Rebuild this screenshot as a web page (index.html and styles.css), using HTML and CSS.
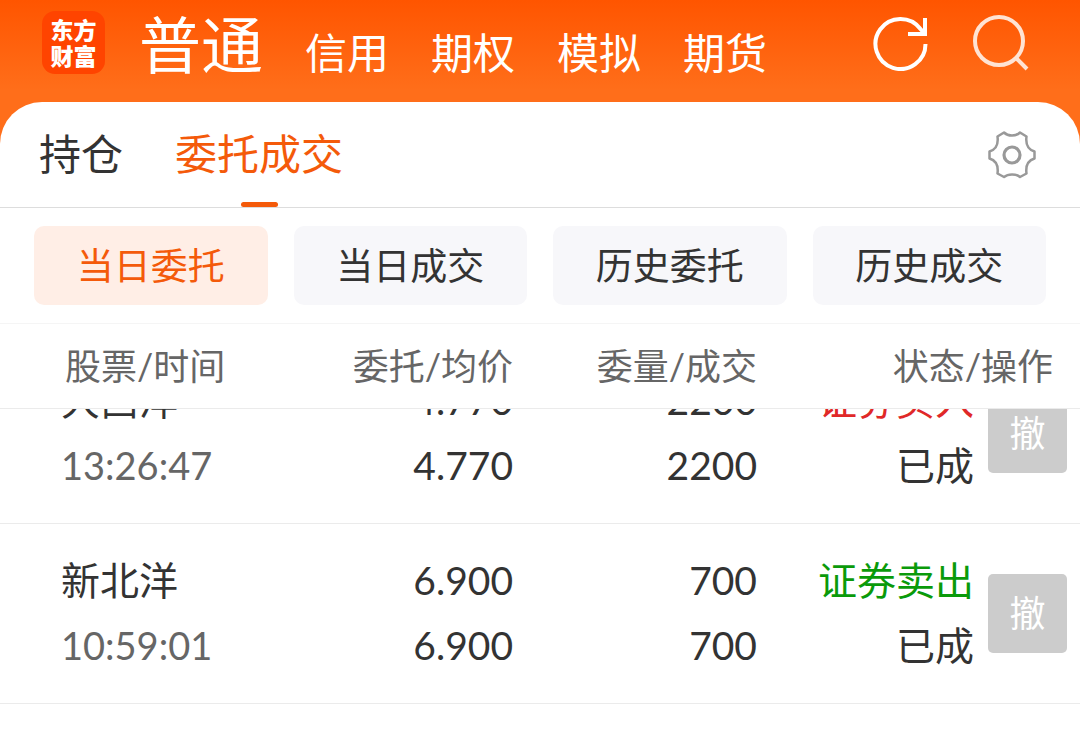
FILE: index.html
```
<!DOCTYPE html>
<html lang="zh-CN">
	<head>
		<meta charset="utf-8">
		<meta name="viewport" content="width=device-width, initial-scale=1.0">
		<title>委托成交</title>
		<link rel="stylesheet" href="styles.css">
	</head>
	<body>
		<header class="top">
			<div class="logo"><span>东方</span><span>财富</span></div>
			<nav class="nav">
				<a class="current" href="#">普通</a>
				<a href="#">信用</a>
				<a href="#">期权</a>
				<a href="#">模拟</a>
				<a href="#">期货</a>
			</nav>
			<button class="icon refresh" type="button" aria-label="刷新">
				<svg width="56" height="56" viewBox="0 0 56 56" fill="none" stroke="#fff" stroke-width="4">
					<path d="M52.500 29A25 25 0 1 1 47.500 14L51 18"/>
					<path d="M52 3V19H35"/>
				</svg>
			</button>
			<button class="icon search" type="button" aria-label="搜索">
				<svg width="56" height="56" viewBox="0 0 56 56" fill="none" stroke="#ffe3d3" stroke-width="4">
					<circle cx="26" cy="26" r="24"/>
					<path d="M43 43L54 54"/>
				</svg>
			</button>
		</header>

		<main class="card">
			<div class="tabs">
				<a href="#">持仓</a>
				<a class="active" href="#">委托成交</a>
				<button class="icon setting" type="button" aria-label="设置">
					<svg width="48" height="48" viewBox="0 0 48 48" fill="none" stroke="#999" stroke-width="2.500" stroke-linejoin="round">
						<path d="M16 1.500C20 5.500 28 5.500 32 1.500L38.500 5.500C37.500 13 40 18.500 46.500 20.500V27.500C40 29.500 37.500 35 38.500 42.500L32 46C28 42.500 20 42.500 16 46L9.500 42.500C10.500 35 8 29.500 1.500 27.500V20.500C8 18.500 10.500 13 9.500 5.500Z"/>
						<circle cx="24" cy="24" r="8" stroke-width="3.200"/>
					</svg>
				</button>
			</div>

			<div class="chips">
				<button class="active" type="button">当日委托</button>
				<button type="button">当日成交</button>
				<button type="button">历史委托</button>
				<button type="button">历史成交</button>
			</div>

			<table class="orders">
				<thead>
					<tr>
						<th>股票/时间</th>
						<th>委托/均价</th>
						<th>委量/成交</th>
						<th class="last" colspan="2">状态/操作</th>
					</tr>
				</thead>
				<tbody>
					<tr>
						<td>大西洋<br><span class="time">13:26:47</span></td>
						<td>4.770<br>4.770</td>
						<td>2200<br>2200</td>
						<td><span class="buy">证券买入</span><br>已成</td>
						<td><button class="cancel" type="button">撤</button></td>
					</tr>
					<tr>
						<td>新北洋<br><span class="time">10:59:01</span></td>
						<td>6.900<br>6.900</td>
						<td>700<br>700</td>
						<td><span class="sell">证券卖出</span><br>已成</td>
						<td><button class="cancel" type="button">撤</button></td>
					</tr>
				</tbody>
			</table>
		</main>
	</body>
</html>
```

FILE: styles.css
```
*{
	box-sizing: border-box;
}
body{
	margin: 0;
	color: #333;
	background: #fff linear-gradient(#ff5500, #ff6e1a 90px) no-repeat;
	background-size: 100% 160px;
	font-family: Lato, "Noto Sans CJK SC", sans-serif;
}
a{
	color: inherit;
	text-decoration: none;
}
button{
	padding: 0;
	border: 0;
	color: inherit;
	font-family: inherit;
}
.icon{
	display: flex;
	background: none;
}

/* 顶部导航 */
.top{
	display: flex;
	align-items: center;
	height: 102px;
	padding: 0 51px 17px 42px;
	color: #fff;
}
.logo{
	display: flex;
	flex-direction: column;
	justify-content: center;
	width: 63px;
	height: 63px;
	border-radius: 13px;
	background: #ff4400;
	font-size: 23px;
	font-weight: 900;
	line-height: 26px;
	text-align: center;
}
.nav{
	display: flex;
	flex: 1;
	align-items: baseline;
	gap: 42px;
	margin-left: 34px;
	padding-top: 12px;
	font-size: 42px;
	line-height: 86px;
	white-space: nowrap;
}
.nav .current{
	font-size: 62px;
}
.refresh{
	margin-right: 44px;
}

/* 白色卡片 */
.card{
	border-radius: 42px 42px 0 0;
	background: #fff;
	overflow: hidden;
}
.tabs{
	display: flex;
	align-items: center;
	gap: 52px;
	height: 106px;
	padding: 0 44px 0 39px;
	border-bottom: 1px solid #ddd;
	font-size: 42px;
	line-height: 105px;
}
.tabs .active{
	position: relative;
	color: #f45a0a;
}
.tabs .active::after{
	content: '';
	position: absolute;
	bottom: 0;
	left: 50%;
	width: 37px;
	height: 5px;
	margin-left: -18px;
	border-radius: 3px;
	background: #f45a0a;
}
.setting{
	margin-left: auto;
}

.chips{
	display: grid;
	grid-template-columns: repeat(4, 1fr);
	gap: 26px;
	padding: 18px 34px;
	border-bottom: 1px solid #f5f5f5;
}
.chips button{
	height: 79px;
	padding-bottom: 4px;
	border-radius: 10px;
	background: #f7f7fa;
	font-size: 37px;
}
.chips .active{
	color: #f45a0a;
	background: #ffeee6;
}

/* 委托列表 */
.orders,
.orders thead,
.orders tbody{
	display: block;
}
.orders tbody{
	overflow: hidden;
}
.orders tr{
	display: grid;
	grid-template-columns: 191fr 261fr 244fr 217fr 93px;
	align-items: center;
	padding: 0 13px 0 61px;
	border-bottom: 1px solid #ebebeb;
}
/* 列表已向上滚动一段，第一行只露出下半部分 */
.orders tbody tr:first-child{
	margin-top: -65px;
}
.orders th{
	padding: 0;
	color: #666;
	font-size: 36px;
	font-weight: 400;
	line-height: 84px;
	text-align: right;
	white-space: nowrap;
}
.orders td{
	padding: 24px 0 25px;
	font-size: 39px;
	line-height: 65px;
	text-align: right;
	white-space: nowrap;
}
.orders th:first-child,
.orders td:first-child{
	text-align: left;
}
.orders th:first-child{
	padding-left: 4px;
}
.orders .last{
	grid-column: span 2;
	padding-right: 14px;
}
.time{
	color: #666;
	font-size: 38px;
}
.buy{
	color: #e02828;
}
.sell{
	color: #0a9a0a;
}
.cancel{
	display: block;
	width: 79px;
	height: 79px;
	margin-left: auto;
	padding-bottom: 4px;
	border-radius: 5px;
	color: #fff;
	background: #ccc;
	font-size: 36px;
}
```
